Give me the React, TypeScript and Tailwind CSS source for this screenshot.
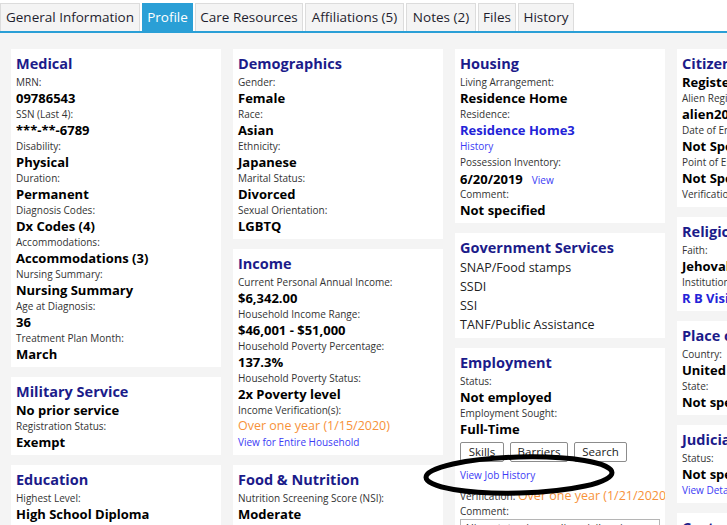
import React from 'react';

type Line =
  | { kind: 'label'; text: string }
  | { kind: 'value'; text: string }
  | { kind: 'link'; text: string }
  | { kind: 'boldLink'; text: string }
  | { kind: 'warn'; text: string };

const tabs = [
  { name: 'General Information', w: 'w-[140px]' },
  { name: 'Profile', w: 'w-[51px]', active: true },
  { name: 'Care Resources', w: 'w-[108px]' },
  { name: 'Affiliations (5)', w: 'w-[99px]' },
  { name: 'Notes (2)', w: 'w-[70px]' },
  { name: 'Files', w: 'w-[38px]' },
  { name: 'History', w: 'w-[56px]' },
];

const font = "font-['Open_Sans','Noto_Sans',sans-serif]";

function Row({ line }: { line: Line }) {
  switch (line.kind) {
    case 'label':
      return <div className="text-[10px] leading-[16px] text-[#333] whitespace-nowrap">{line.text}</div>;
    case 'value':
      return <div className="text-[13px] leading-[16px] font-bold text-black whitespace-nowrap">{line.text}</div>;
    case 'link':
      return <div className="text-[10px] leading-[16px] text-[#3b3bf5] whitespace-nowrap">{line.text}</div>;
    case 'boldLink':
      return <div className="text-[13px] leading-[16px] font-bold text-[#2323d8] whitespace-nowrap">{line.text}</div>;
    case 'warn':
      return <div className="text-[12.5px] leading-[16px] text-[#f7923a] whitespace-nowrap">{line.text}</div>;
  }
}

function Card({ title, children }: { title: string; children: React.ReactNode }) {
  return (
    <div className="bg-white px-[5px] py-[5px] overflow-hidden">
      <div className="text-[14.5px] leading-[20px] font-bold text-[#1b1b8a] whitespace-nowrap">{title}</div>
      {children}
    </div>
  );
}

function FieldCard({ title, lines }: { title: string; lines: Line[] }) {
  return (
    <Card title={title}>
      {lines.map((l, i) => (
        <Row key={i} line={l} />
      ))}
    </Card>
  );
}

const L = (text: string): Line => ({ kind: 'label', text });
const V = (text: string): Line => ({ kind: 'value', text });

export default function App() {
  return (
    <div className={`relative w-full h-[525px] overflow-hidden bg-[#f4f4f4] ${font}`}>
      {/* tab strip */}
      <div className="flex items-end h-[33px] pt-[3px] bg-white border-b-2 border-[#2a9fd6]">
        {tabs.map((t) => (
          <div
            key={t.name}
            className={`${t.w} h-[28px] mr-[2px] shrink-0 text-center text-[13.5px] leading-[27px] whitespace-nowrap border border-b-0 ${
              t.active ? 'bg-[#2a9fd6] border-[#2a9fd6] text-white' : 'bg-[#f4f4f4] border-[#dcdcdc] text-[#1e1e2e]'
            }`}
          >
            {t.name}
          </div>
        ))}
      </div>

      <div className="flex gap-[12px] pl-[11px] pt-[16px]">
        {/* column 1 */}
        <div className="w-[210px] shrink-0 flex flex-col gap-[10px]">
          <FieldCard
            title="Medical"
            lines={[
              L('MRN:'), V('09786543'),
              L('SSN (Last 4):'), V('***-**-6789'),
              L('Disability:'), V('Physical'),
              L('Duration:'), V('Permanent'),
              L('Diagnosis Codes:'), V('Dx Codes (4)'),
              L('Accommodations:'), V('Accommodations (3)'),
              L('Nursing Summary:'), V('Nursing Summary'),
              L('Age at Diagnosis:'), V('36'),
              L('Treatment Plan Month:'), V('March'),
            ]}
          />
          <FieldCard
            title="Military Service"
            lines={[V('No prior service'), L('Registration Status:'), V('Exempt')]}
          />
          <FieldCard
            title="Education"
            lines={[L('Highest Level:'), V('High School Diploma'), L('Currently Enrolled:'), V('No')]}
          />
        </div>

        {/* column 2 */}
        <div className="w-[210px] shrink-0 flex flex-col gap-[10px]">
          <FieldCard
            title="Demographics"
            lines={[
              L('Gender:'), V('Female'),
              L('Race:'), V('Asian'),
              L('Ethnicity:'), V('Japanese'),
              L('Marital Status:'), V('Divorced'),
              L('Sexual Orientation:'), V('LGBTQ'),
            ]}
          />
          <FieldCard
            title="Income"
            lines={[
              L('Current Personal Annual Income:'), V('$6,342.00'),
              L('Household Income Range:'), V('$46,001 - $51,000'),
              L('Household Poverty Percentage:'), V('137.3%'),
              L('Household Poverty Status:'), V('2x Poverty level'),
              L('Income Verification(s):'),
              { kind: 'warn', text: 'Over one year (1/15/2020)' },
              { kind: 'link', text: 'View for Entire Household' },
            ]}
          />
          <FieldCard
            title="Food & Nutrition"
            lines={[L('Nutrition Screening Score (NSI):'), V('Moderate'), L('Food Security:'), V('Low')]}
          />
        </div>

        {/* column 3 */}
        <div className="w-[210px] shrink-0 flex flex-col gap-[10px]">
          <Card title="Housing">
            <Row line={L('Living Arrangement:')} />
            <Row line={V('Residence Home')} />
            <Row line={L('Residence:')} />
            <Row line={{ kind: 'boldLink', text: 'Residence Home3' }} />
            <Row line={{ kind: 'link', text: 'History' }} />
            <Row line={L('Possession Inventory:')} />
            <div className="h-[16px] leading-[16px] whitespace-nowrap">
              <span className="text-[13px] font-bold text-black">6/20/2019</span>
              <span className="ml-[9px] text-[10px] leading-[0] text-[#3b3bf5]">View</span>
            </div>
            <Row line={L('Comment:')} />
            <Row line={V('Not specified')} />
          </Card>

          <div className="bg-white px-[5px] pt-[5px] pb-[4px]">
            <div className="text-[14.5px] leading-[20px] font-bold text-[#1b1b8a]">Government Services</div>
            {['SNAP/Food stamps', 'SSDI', 'SSI', 'TANF/Public Assistance'].map((s) => (
              <div key={s} className="text-[12.5px] leading-[19px] text-[#222]">{s}</div>
            ))}
          </div>

          <Card title="Employment">
            <Row line={L('Status:')} />
            <Row line={V('Not employed')} />
            <Row line={L('Employment Sought:')} />
            <Row line={V('Full-Time')} />
            <div className="flex gap-[6px] mt-[5px]">
              {[
                { t: 'Skills', w: 'w-[44px]' },
                { t: 'Barriers', w: 'w-[58px]' },
                { t: 'Search', w: 'w-[53px]' },
              ].map((b) => (
                <div
                  key={b.t}
                  className={`${b.w} h-[20px] border border-[#8c8c8c] rounded-[2px] bg-white text-center text-[11.5px] leading-[18px] text-[#222]`}
                >
                  {b.t}
                </div>
              ))}
            </div>
            <div className="mt-[5px] text-[10px] leading-[16px] text-[#3b3bf5]">View Job History</div>
            <div className="mt-[2px] h-[18px] leading-[18px] whitespace-nowrap">
              <span className="text-[10px] text-[#333]">Verification: </span>
              <span className="text-[12.5px] text-[#f7923a]">Over one year (1/21/2020)</span>
            </div>
            <Row line={L('Comment:')} />
            <div className="h-[40px] border border-[#b5b5b5] px-[3px] text-[11px] leading-[16px] text-[#333]">
              Alien status is pending civil review
            </div>
          </Card>
        </div>

        {/* column 4 */}
        <div className="w-[210px] shrink-0 flex flex-col gap-[10px]">
          <FieldCard
            title="Citizenship"
            lines={[
              V('Registered Alien'),
              L('Alien Registration Number:'), V('alien2020-0042'),
              L('Date of Entry:'), V('Not Specified'),
              L('Point of Entry:'), V('Not Specified'),
              L('Verification:'),
            ]}
          />
          <FieldCard
            title="Religion"
            lines={[
              L('Faith:'), V("Jehovah's Witness"),
              L('Institution:'), { kind: 'boldLink', text: 'R B Visitation Hall' },
            ]}
          />
          <FieldCard
            title="Place of Birth"
            lines={[L('Country:'), V('United States'), L('State:'), V('Not specified')]}
          />
          <FieldCard
            title="Judicial"
            lines={[L('Status:'), V('Not specified'), { kind: 'link', text: 'View Details' }]}
          />
          <FieldCard title="Custody" lines={[L('Status:'), V('Not specified')]} />
        </div>
      </div>

      {/* hand-drawn marker ring around the job history link */}
      <svg className="absolute left-[418px] top-[447px] pointer-events-none" width="204" height="56" viewBox="0 0 204 56">
        <ellipse
          cx="101"
          cy="28"
          rx="93"
          ry="18"
          fill="none"
          stroke="#000"
          strokeWidth="5"
          transform="rotate(-1.5 101 28)"
        />
      </svg>
    </div>
  );
}
